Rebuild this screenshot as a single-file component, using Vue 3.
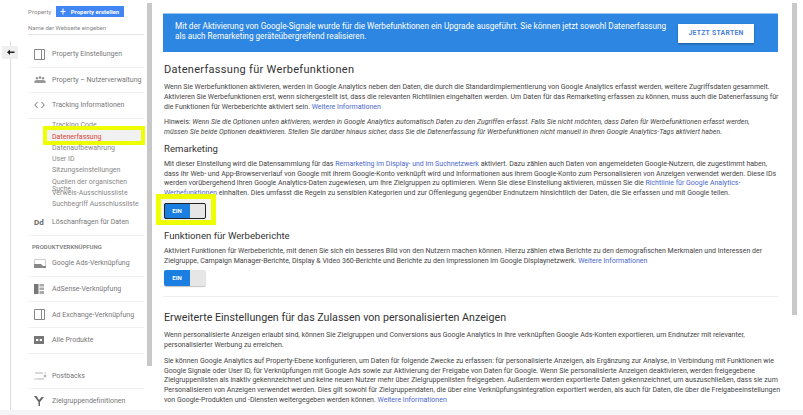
<script setup>
const topItems = [
  { label: 'Property Einstellungen', icon: 'panel' },
  { label: 'Property – Nutzerverwaltung', icon: 'people' },
  { label: 'Tracking Informationen', icon: 'code' }
]

const subItems = [
  { label: 'Tracking Code' },
  { label: 'Datenerfassung', active: true },
  { label: 'Datenaufbewahrung' },
  { label: 'User ID' },
  { label: 'Sitzungseinstellungen' },
  { label: 'Quellen der organischen Suche' },
  { label: 'Verweis-Ausschlussliste' },
  { label: 'Suchbegriff Ausschlussliste' }
]

const productItems = [
  { label: 'Google Ads-Verknüpfung', icon: 'ads' },
  { label: 'AdSense-Verknüpfung', icon: 'adsense' },
  { label: 'Ad Exchange-Verknüpfung', icon: 'panel' },
  { label: 'Alle Produkte', icon: 'link' }
]
</script>

<template>
  <div class="page">
    <div class="columns">
      <div class="rail">
        <button class="back">
          <svg width="9" height="7" viewBox="0 0 9 7"><path d="M4 0.5 1 3.2 4 6V4h4.5V2.4H4z" fill="#222" /></svg>
        </button>
      </div>

      <aside class="sidebar">
        <div class="property-row">
          <span>Property</span>
          <span class="create-btn"><b class="plus">+</b>Property erstellen</span>
        </div>
        <div class="site-name">Name der Webseite eingeben</div>

        <div v-for="item in topItems" :key="item.label" class="nav-row">
          <span class="nav-icon">
            <svg v-if="item.icon === 'panel'" width="11" height="11" viewBox="0 0 11 11"><path d="M.5.5h10v10H.5zM7.5.5v10" fill="none" stroke="#888" /></svg>
            <svg v-else-if="item.icon === 'people'" width="12" height="7" viewBox="0 0 13 8"><circle cx="3" cy="2.5" r="1.4" fill="#999" /><circle cx="6.5" cy="1.8" r="1.6" fill="#999" /><circle cx="10" cy="2.5" r="1.4" fill="#999" /><path d="M0 8V6l2-1.500h9L13 6v2z" fill="#999" /></svg>
            <svg v-else width="11" height="8" viewBox="0 0 11 8"><path d="M3.500 1 .8 4l2.700 3M7.500 1l2.700 3-2.700 3" fill="none" stroke="#666" stroke-width=".9" /></svg>
          </span>
          {{ item.label }}
        </div>

        <ul class="sub-list">
          <li v-for="sub in subItems" :key="sub.label" :class="{ active: sub.active }">{{ sub.label }}</li>
        </ul>

        <div class="nav-row delete-row">
          <span class="nav-icon dd">Dd</span>
          Löschanfragen für Daten
        </div>

        <div class="section-title">PRODUKTVERKNÜPFUNG</div>

        <div v-for="item in productItems" :key="item.label" class="nav-row">
          <span class="nav-icon">
            <svg v-if="item.icon === 'ads'" width="12" height="9" viewBox="0 0 12 9"><path d="M.5.500h11v8H.5z" fill="none" stroke="#ccc" /><path d="M0 5h7l2 2h3v2H0z" fill="#888" /></svg>
            <svg v-else-if="item.icon === 'adsense'" width="10" height="10" viewBox="0 0 10 10"><path d="M0 0h4.500v10H0z" fill="#777" /><path d="M5.500 0H10v2.500H5.500zM5.500 3.500H10v2.500H5.500zM5.500 7H10v3H5.500z" fill="#aaa" /></svg>
            <svg v-else-if="item.icon === 'link'" width="10" height="8" viewBox="0 0 10 8"><path d="M0 0h10v8H0z" fill="#777" /><path d="M2 3h2v2H2zM6 3h2v2H6zM4 3.700h2v.6H4z" fill="#fff" /></svg>
            <svg v-else width="11" height="11" viewBox="0 0 11 11"><path d="M.5.5h10v10H.5zM7.500.5v10" fill="none" stroke="#888" /></svg>
          </span>
          {{ item.label }}
        </div>

        <div class="nav-row postbacks">
          <span class="nav-icon">
            <svg width="13" height="12" viewBox="0 0 13 12"><path d="M1 3h8M3 9h7" stroke="#ccc" stroke-width="1.600" /><path d="M0 9h3M10 3h2" stroke="#ddd" stroke-width="1.600" /><circle cx="11" cy="6" r="1.500" fill="#bbb" /></svg>
          </span>
          Postbacks
        </div>
        <div class="nav-row last-row">
          <span class="nav-icon">
            <svg width="10" height="10" viewBox="0 0 10 10"><path d="M0 0h2.500l2.500 4L7.500 1H10L6 6v4H4.500V6z" fill="#666" /></svg>
          </span>
          Zielgruppendefinitionen
        </div>
      </aside>

      <div class="side-scroll"><span></span></div>

      <main class="main">
        <div class="banner">
          <p>
            Mit der Aktivierung von Google-Signale wurde für die Werbefunktionen ein Upgrade ausgeführt. Sie können jetzt sowohl Datenerfassung<br />
            als auch Remarketing geräteübergreifend realisieren.
          </p>
          <button class="start">JETZT STARTEN</button>
        </div>

        <h2 class="h-first">Datenerfassung für Werbefunktionen</h2>
        <p>
          Wenn Sie Werbefunktionen aktivieren, werden in Google Analytics neben den Daten, die durch die Standardimplementierung von Google Analytics erfasst werden, weitere Zugriffsdaten gesammelt.<br />
          Aktivieren Sie Werbefunktionen erst, wenn sichergestellt ist, dass die relevanten Richtlinien eingehalten werden. Um Daten für das Remarketing erfassen zu können, muss auch die Datenerfassung für<br />
          die Funktionen für Werbeberichte aktiviert sein. <a>Weitere Informationen</a>
        </p>
        <p class="gap">
          Hinweis: <i>Wenn Sie die Optionen unten aktivieren, werden in Google Analytics automatisch Daten zu den Zugriffen erfasst. Falls Sie nicht möchten, dass Daten für Werbefunktionen erfasst werden,<br />
          müssen Sie beide Optionen deaktivieren. Stellen Sie darüber hinaus sicher, dass Sie die Datenerfassung für Werbefunktionen nicht manuell in Ihren Google Analytics-Tags aktiviert haben.</i>
        </p>

        <h2 class="h-remarketing">Remarketing</h2>
        <p>
          Mit dieser Einstellung wird die Datensammlung für das <a>Remarketing im Display- und im Suchnetzwerk</a> aktiviert. Dazu zählen auch Daten von angemeldeten Google-Nutzern, die zugestimmt haben,<br />
          dass ihr Web- und App-Browserverlauf von Google mit ihrem Google-Konto verknüpft wird und Informationen aus ihrem Google-Konto zum Personalisieren von Anzeigen verwendet werden. Diese IDs<br />
          werden vorübergehend Ihren Google Analytics-Daten zugewiesen, um Ihre Zielgruppen zu optimieren. Wenn Sie diese Einstellung aktivieren, müssen Sie die <a>Richtlinie für Google Analytics-</a><br />
          <a>Werbefunktionen</a> einhalten. Dies umfasst die Regeln zu sensiblen Kategorien und zur Offenlegung gegenüber Endnutzern hinsichtlich der Daten, die Sie erfassen und mit Google teilen.
        </p>
        <div class="toggle marked"><span class="on">EIN</span><span class="off"></span></div>

        <h2 class="h-reports">Funktionen für Werbeberichte</h2>
        <p>
          Aktiviert Funktionen für Werbeberichte, mit denen Sie sich ein besseres Bild von den Nutzern machen können. Hierzu zählen etwa Berichte zu den demografischen Merkmalen und Interessen der<br />
          Zielgruppe, Campaign Manager-Berichte, Display &amp; Video 360-Berichte und Berichte zu den Impressionen im Google Displaynetzwerk. <a>Weitere Informationen</a>
        </p>
        <div class="toggle"><span class="on">EIN</span><span class="off"></span></div>

        <hr />

        <h2 class="h-extended">Erweiterte Einstellungen für das Zulassen von personalisierten Anzeigen</h2>
        <p>
          Wenn personalisierte Anzeigen erlaubt sind, können Sie Zielgruppen und Conversions aus Google Analytics in Ihre verknüpften Google Ads-Konten exportieren, um Endnutzer mit relevanter,<br />
          personalisierter Werbung zu erreichen.
        </p>
        <p class="gap">
          Sie können Google Analytics auf Property-Ebene konfigurieren, um Daten für folgende Zwecke zu erfassen: für personalisierte Anzeigen, als Ergänzung zur Analyse, in Verbindung mit Funktionen wie<br />
          Google Signale oder User ID, für Verknüpfungen mit Google Ads sowie zur Aktivierung der Freigabe von Daten für Google. Wenn Sie personalisierte Anzeigen deaktivieren, werden freigegebene<br />
          Zielgruppenlisten als inaktiv gekennzeichnet und keine neuen Nutzer mehr über Zielgruppenlisten freigegeben. Außerdem werden exportierte Daten gekennzeichnet, um auszuschließen, dass sie zum<br />
          Personalisieren von Anzeigen verwendet werden. Dies gilt sowohl für Zielgruppendaten, die über eine Verknüpfungsintegration exportiert werden, als auch für Daten, die über die Freigabeeinstellungen<br />
          von Google-Produkten und -Diensten weitergegeben werden können. <a>Weitere Informationen</a>
        </p>
      </main>

      <div class="main-scroll"><span></span></div>
    </div>
    <div class="strip"></div>
  </div>
</template>

<style scoped>
.page {
  width: 803px;
  height: 415px;
  overflow: hidden;
  background: #fff;
  font-family: Roboto, "Liberation Sans", sans-serif;
  color: #444;
}

.columns {
  display: flex;
  height: 410px;
}

.strip {
  position: relative;
  height: 5px;
  background: #f5f5f8;
}

.rail {
  position: relative;
  width: 28px;
  flex: none;
}

.rail::before {
  content: "";
  position: absolute;
  left: 10px;
  top: 41px;
  bottom: 0;
  width: 1px;
  background: #ddd;
}

.back {
  position: absolute;
  left: 2px;
  top: 46px;
  width: 16px;
  height: 13px;
  padding: 0;
  border: 0;
  background: #efefef;
  display: flex;
  align-items: center;
  justify-content: center;
}

.sidebar {
  width: 116px;
  flex: none;
  font-size: 7px;
  color: #7a7a7a;
}

.property-row {
  display: flex;
  align-items: center;
  justify-content: space-between;
  width: 96px;
  height: 11px;
  margin-top: 6px;
  font-size: 6.2px;
  color: #888;
}

.create-btn {
  display: flex;
  align-items: center;
  width: 68px;
  height: 11px;
  padding-left: 4px;
  box-sizing: border-box;
  background: #4285f4;
  color: #fff;
  font-size: 6px;
  font-weight: 700;
  white-space: nowrap;
}

.plus {
  font-size: 10px;
  font-weight: 400;
  margin-right: 5px;
  line-height: 11px;
}

.site-name {
  height: 17px;
  margin-bottom: 7px;
  line-height: 22px;
  border-bottom: 1px solid #e4e4e4;
  font-size: 6px;
  color: #888;
  white-space: nowrap;
}

.nav-row {
  display: flex;
  align-items: center;
  height: 24.6px;
  border-bottom: 1px solid #f0f0f0;
  white-space: nowrap;
  color: #777;
}

.nav-icon {
  width: 23px;
  margin-left: 6px;
  margin-right: -5px;
  flex: none;
  display: flex;
  align-items: center;
}

.dd {
  font-size: 8px;
  font-weight: 700;
  color: #666;
}

.sub-list {
  list-style: none;
  margin: 0;
  padding: 1.5px 0 0 24px;
}

.sub-list li {
  position: relative;
  height: 11.3px;
  line-height: 7.6px;
  padding-top: 2px;
  box-sizing: border-box;
  width: 88px;
  color: #888;
}

.sub-list li.active {
  color: #db4437;
  z-index: 0;
}

.sub-list li.active::before {
  content: "";
  position: absolute;
  left: -9px;
  right: -5px;
  top: -6px;
  bottom: -2px;
  z-index: -1;
  background: #f1f1f1;
  border: 4px solid #eeff00;
}

.delete-row {
  height: 25px;
  margin-top: -1px;
}

.section-title {
  height: 15.5px;
  line-height: 22px;
  padding-left: 4px;
  font-size: 6px;
  font-weight: 700;
  color: #888;
}

.postbacks {
  margin-top: 10px;
}

.last-row {
  border-bottom: 0;
}

.side-scroll {
  width: 5px;
  margin-left: 3px;
  flex: none;
}

.side-scroll span {
  display: block;
  height: 363px;
  margin-top: 3px;
  background: #c8c8c8;
}

.main {
  width: 615px;
  flex: none;
  margin-left: 11px;
  padding-top: 13px;
}

.banner {
  display: flex;
  align-items: center;
  justify-content: space-between;
  height: 39px;
  padding: 0 24px 0 12px;
  box-sizing: border-box;
  background: #2d87e2;
  border-top: 1px solid #9ac4ee;
}

.banner p {
  font-size: 8.2px;
  line-height: 9.6px;
  color: #fff;
  padding: 0 0 3px;
}

.start {
  width: 76px;
  height: 19px;
  padding: 0;
  border: 0;
  background: #fff;
  box-shadow: 0 1px 2px rgba(0, 0, 0, 0.35);
  color: #4a7fd8;
  font-family: inherit;
  font-size: 6.8px;
  font-weight: 700;
  letter-spacing: 0.3px;
}

h2 {
  margin: 0 0 6px;
  padding-left: 1px;
  font-weight: 400;
  line-height: 13px;
  color: #333;
}

.h-first {
  margin: 11px 0 7px;
  font-size: 11px;
  letter-spacing: 0.3px;
}

.h-remarketing {
  margin-top: 4px;
  margin-bottom: 5px;
  font-size: 9.6px;
}

.h-reports {
  margin-top: 1px;
  margin-bottom: 5px;
  font-size: 9.6px;
}

.h-extended {
  margin: 14px 0 7px;
  font-size: 10.7px;
}

p {
  margin: 0;
  padding-left: 1px;
  font-size: 7px;
  line-height: 9.75px;
  white-space: nowrap;
}

.gap {
  margin-top: 6px;
}

a {
  color: #4a68cc;
}

.toggle {
  position: relative;
  z-index: 0;
  display: flex;
  width: 42px;
  height: 16px;
  margin: 4px 0 10px 1px;
  border-radius: 2px;
  box-shadow: 0 1px 1px rgba(0, 0, 0, 0.25);
}

.toggle.marked {
  outline: 1px solid #222;
  outline-offset: -1px;
}

.toggle.marked::before {
  content: "";
  position: absolute;
  left: -8px;
  right: -10px;
  top: -9px;
  bottom: -6px;
  z-index: -1;
  background: #f3f3f3;
  border: 5px solid #eeff00;
}

.on {
  width: 26px;
  background: #1a7fe0;
  border-radius: 2px 0 0 2px;
  color: #fff;
  font-size: 6px;
  font-weight: 700;
  line-height: 16px;
  text-align: center;
}

.off {
  flex: 1;
  background: #e6e6e6;
  border-radius: 0 2px 2px 0;
}

hr {
  height: 1px;
  margin: 1px 0 0;
  border: 0;
  background: #eee;
}

.main-scroll {
  width: 5px;
  margin-left: 14px;
  flex: none;
}

.main-scroll span {
  display: block;
  height: 312px;
  margin-top: 3px;
  background: #c8c8c8;
}
</style>

<style>
body {
  margin: 0;
}
</style>
